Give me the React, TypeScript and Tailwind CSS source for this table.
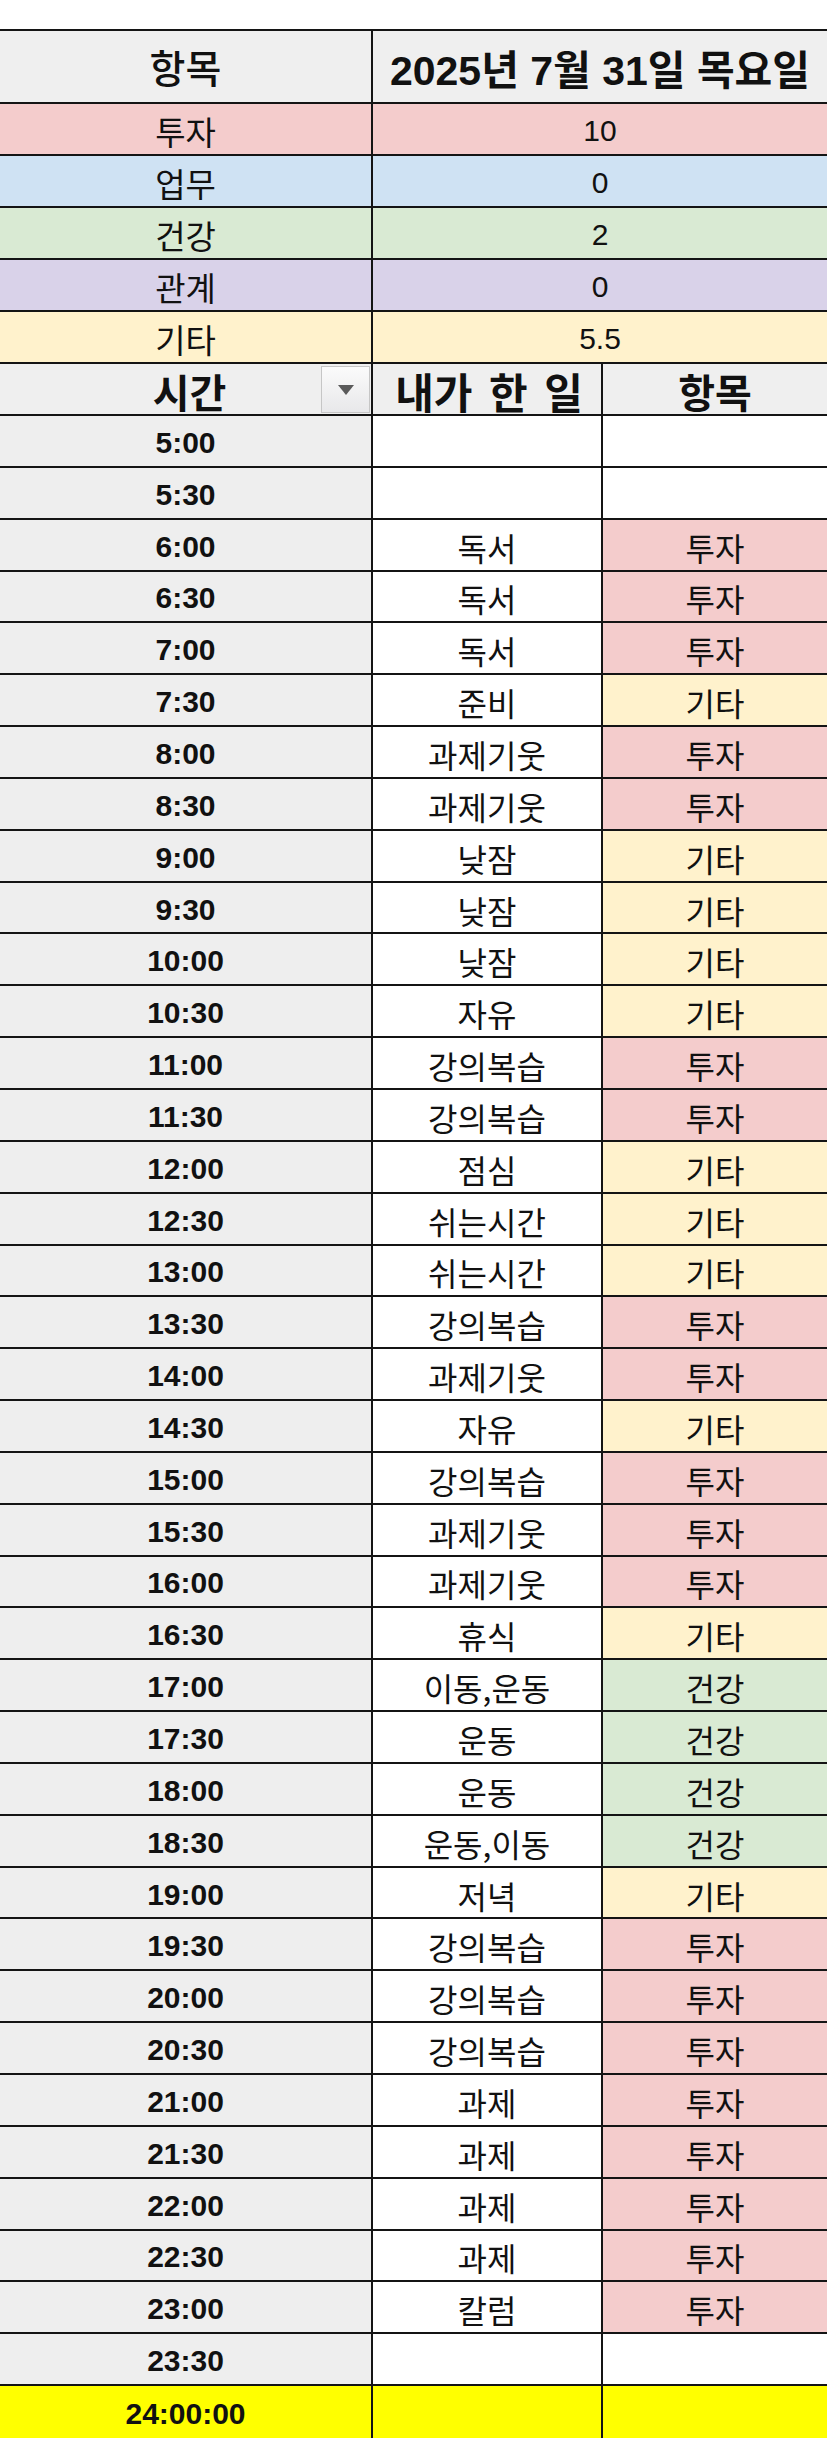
import React from 'react';

type Cat = '투자' | '업무' | '건강' | '관계' | '기타';

const catBg: Record<Cat, string> = {
  투자: 'bg-[#f4cccc]',
  업무: 'bg-[#cfe2f3]',
  건강: 'bg-[#d9ead3]',
  관계: 'bg-[#d9d2e9]',
  기타: 'bg-[#fff2cc]',
};

const summary: Array<{ cat: Cat; value: string }> = [
  { cat: '투자', value: '10' },
  { cat: '업무', value: '0' },
  { cat: '건강', value: '2' },
  { cat: '관계', value: '0' },
  { cat: '기타', value: '5.5' },
];

const log: Array<[string, string, Cat | '']> = [
  ['5:00', '', ''],
  ['5:30', '', ''],
  ['6:00', '독서', '투자'],
  ['6:30', '독서', '투자'],
  ['7:00', '독서', '투자'],
  ['7:30', '준비', '기타'],
  ['8:00', '과제기웃', '투자'],
  ['8:30', '과제기웃', '투자'],
  ['9:00', '낮잠', '기타'],
  ['9:30', '낮잠', '기타'],
  ['10:00', '낮잠', '기타'],
  ['10:30', '자유', '기타'],
  ['11:00', '강의복습', '투자'],
  ['11:30', '강의복습', '투자'],
  ['12:00', '점심', '기타'],
  ['12:30', '쉬는시간', '기타'],
  ['13:00', '쉬는시간', '기타'],
  ['13:30', '강의복습', '투자'],
  ['14:00', '과제기웃', '투자'],
  ['14:30', '자유', '기타'],
  ['15:00', '강의복습', '투자'],
  ['15:30', '과제기웃', '투자'],
  ['16:00', '과제기웃', '투자'],
  ['16:30', '휴식', '기타'],
  ['17:00', '이동,운동', '건강'],
  ['17:30', '운동', '건강'],
  ['18:00', '운동', '건강'],
  ['18:30', '운동,이동', '건강'],
  ['19:00', '저녁', '기타'],
  ['19:30', '강의복습', '투자'],
  ['20:00', '강의복습', '투자'],
  ['20:30', '강의복습', '투자'],
  ['21:00', '과제', '투자'],
  ['21:30', '과제', '투자'],
  ['22:00', '과제', '투자'],
  ['22:30', '과제', '투자'],
  ['23:00', '칼럼', '투자'],
  ['23:30', '', ''],
];

const kr = "font-['Noto_Sans_CJK_KR',sans-serif]";
const num = "font-['Liberation_Sans','Noto_Sans_CJK_KR',sans-serif]";

export default function App() {
  return (
    <div className="w-[827px] overflow-hidden bg-white pt-[29px] text-[#111]">
      <div className="border-t-2 border-[#141414]">
        {/* title row */}
        <div className="grid h-[73px] grid-cols-[373px_1fr] border-b-2 border-[#141414] bg-[#efefef]">
          <div className={`flex items-center justify-center border-r-2 border-[#141414] text-[39px] font-medium leading-none ${kr}`}>
            항목
          </div>
          <div className={`flex items-end justify-center pb-[10px] text-[41px] font-bold leading-none ${num}`}>
            2025년 7월 31일 목요일
          </div>
        </div>

        {/* summary rows */}
        {summary.map(({ cat, value }) => (
          <div
            key={cat}
            className={`grid h-[52px] grid-cols-[373px_1fr] border-b-2 border-[#141414] ${catBg[cat]}`}
          >
            <div className={`flex items-center justify-center border-r-2 border-[#141414] pt-1 text-[33px] leading-none ${kr}`}>
              {cat}
            </div>
            <div className={`flex items-center justify-center pt-1 text-[30px] leading-none ${num}`}>
              {value}
            </div>
          </div>
        ))}

        {/* column header */}
        <div className="grid h-[52px] grid-cols-[373px_230px_1fr] border-b-2 border-[#141414] bg-[#efefef]">
          <div className={`relative flex items-center justify-center border-r-2 border-[#141414] pt-1 text-[40px] font-bold leading-none ${kr}`}>
            <span className="ml-2">시간</span>
            <div className="absolute top-[2px] right-[1px] bottom-[1px] flex w-[49px] items-center justify-center border border-[#c6c6c6] bg-gradient-to-b from-[#fbfbfb] to-[#e8e8ea]">
              <svg width="16" height="10" viewBox="0 0 16 10">
                <path d="M0 0H16L8 10Z" fill="#5a5a5a" />
              </svg>
            </div>
          </div>
          <div className={`flex items-center justify-center border-r-2 border-[#141414] pt-1 pl-1 text-[42px] font-bold leading-none [word-spacing:7px] ${kr}`}>
            내가 한 일
          </div>
          <div className={`flex items-center justify-center pt-1 text-[40px] font-bold leading-none ${kr}`}>
            항목
          </div>
        </div>

        {/* time rows */}
        {log.map(([time, what, cat]) => (
          <div
            key={time}
            className="grid h-[51.85px] grid-cols-[373px_230px_1fr] border-b-2 border-[#141414]"
          >
            <div className={`flex items-center justify-center border-r-2 border-[#141414] bg-[#eeeeee] pt-1 text-[30px] font-bold leading-none ${num}`}>
              {time}
            </div>
            <div className={`flex items-center justify-center border-r-2 border-[#141414] bg-white pt-1 text-[32px] leading-none ${kr}`}>
              {what}
            </div>
            <div className={`flex items-center justify-center pt-1 text-[32px] leading-none ${kr} ${cat ? catBg[cat] : 'bg-white'}`}>
              {cat}
            </div>
          </div>
        ))}

        <div className="grid h-[52px] grid-cols-[373px_230px_1fr] bg-[#ffff00]">
          <div className={`flex items-center justify-center border-r-2 border-[#141414] pt-1 text-[30px] font-bold leading-none ${num}`}>
            24:00:00
          </div>
          <div className="border-r-2 border-[#141414]" />
          <div />
        </div>
      </div>
    </div>
  );
}
